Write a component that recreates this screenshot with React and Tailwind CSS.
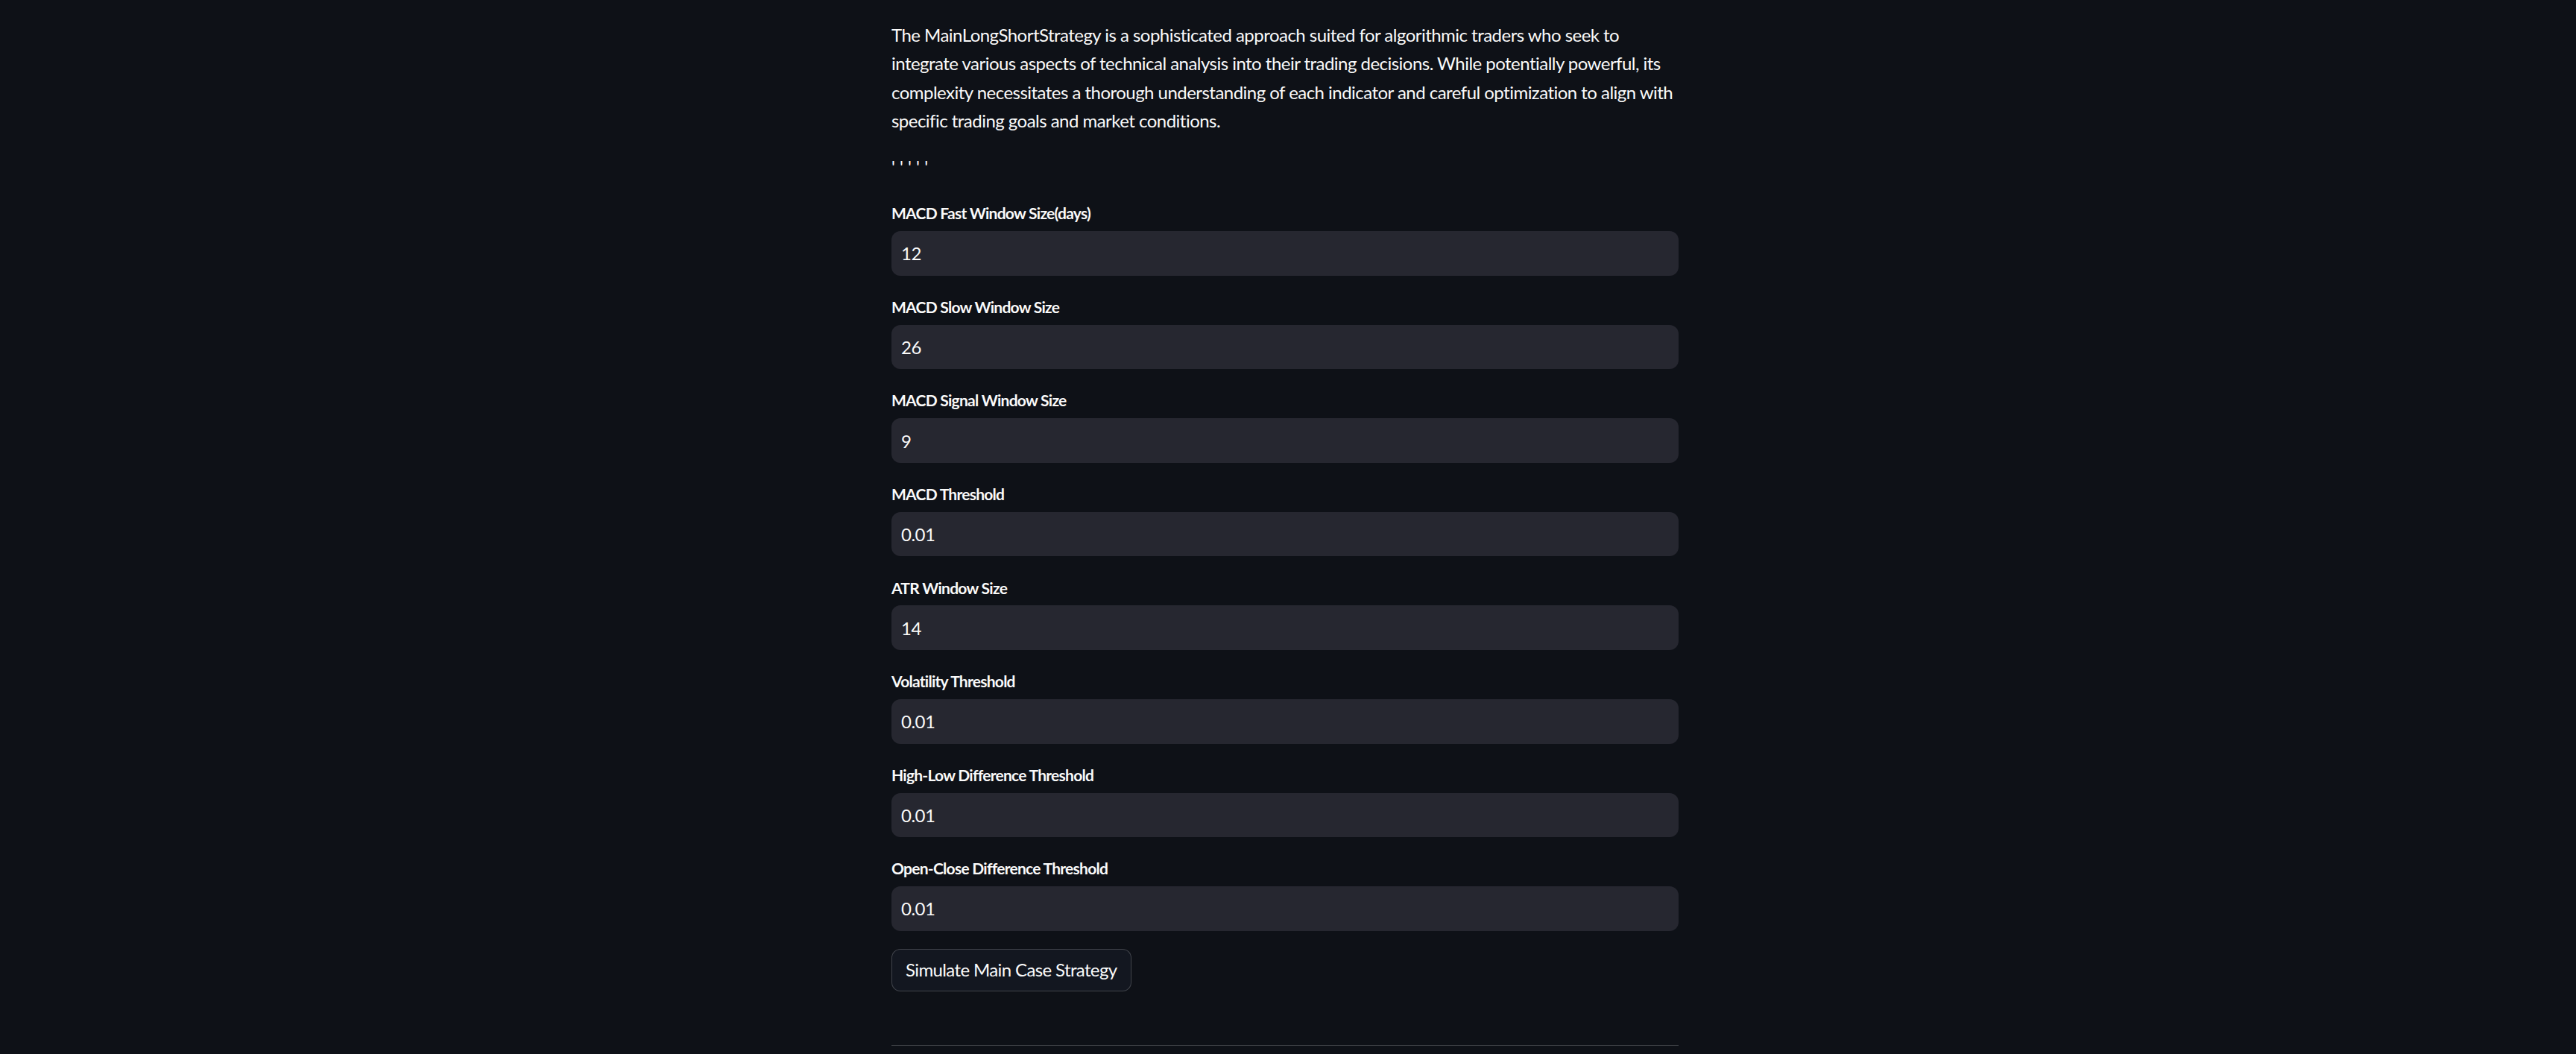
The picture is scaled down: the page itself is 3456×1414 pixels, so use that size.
const fields = [
  { label: 'MACD Fast Window Size(days)', value: '12' },
  { label: 'MACD Slow Window Size', value: '26' },
  { label: 'MACD Signal Window Size', value: '9' },
  { label: 'MACD Threshold', value: '0.01' },
  { label: 'ATR Window Size', value: '14' },
  { label: 'Volatility Threshold', value: '0.01' },
  { label: 'High-Low Difference Threshold', value: '0.01' },
  { label: 'Open-Close Difference Threshold', value: '0.01' },
];

function NumberField({ label, value }) {
  return (
    <div className="flex flex-col">
      <label className="h-[36px] mb-[6px] flex items-center text-[21px] font-bold tracking-[-0.035em] text-[#fafafa]">{label}</label>
      <input
        type="text"
        defaultValue={value}
        className="h-[59.6px] w-full rounded-[12px] bg-[#262730] px-[13px] text-[24px] tracking-[-0.02em] text-[#fafafa] outline-none"
      />
    </div>
  );
}

export default function App() {
  return (
    <div className="min-h-screen bg-[#0e1117] text-[#fafafa]" style={{ fontFamily: 'Lato, "Noto Sans", sans-serif' }}>
      <div className="ml-[1196px] w-[1056px] pt-[28px] pb-[10px]">
        <p className="text-[24px] leading-[38.4px] tracking-[-0.022em] mb-[23px]">
          The MainLongShortStrategy is a sophisticated approach suited for algorithmic traders who seek to integrate various
          aspects of technical analysis into their trading decisions. While potentially powerful, its complexity necessitates a
          thorough understanding of each indicator and careful optimization to align with specific trading goals and market
          conditions.
        </p>
        <p className="text-[24px] leading-[38.4px] mb-[25px]">' ' ' ' '</p>
        <div className="flex flex-col gap-[24px]">
          {fields.map((f) => (
            <NumberField key={f.label} label={f.label} value={f.value} />
          ))}
          <div>
            <button className="h-[57px] rounded-[12px] border border-[#fafafa33] bg-[#131720] px-[18px] text-[24px] tracking-[-0.026em] text-[#fafafa]">
              Simulate Main Case Strategy
            </button>
          </div>
        </div>
        <hr className="mt-[72px] border-0 border-t border-[#fafafa33]" />
      </div>
    </div>
  );
}
